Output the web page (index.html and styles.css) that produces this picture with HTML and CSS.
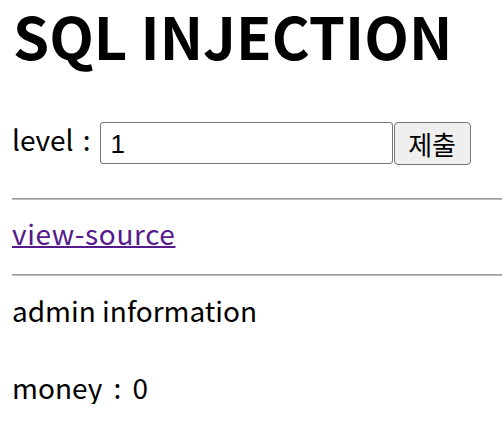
FILE: index.html
```html
<!DOCTYPE html>
<html>
<head>
<meta charset="utf-8">
<link rel="stylesheet" href="styles.css">
</head>
<body>
<h1 class="title">SQL INJECTION</h1>
<form class="level-form">
  <label class="level-label">level :</label>
  <input class="level-input" type="text" value="1">
  <button class="submit-btn" type="button">제출</button>
</form>
<hr class="rule rule-top">
<a class="source-link" href="#">view-source</a>
<hr class="rule rule-bottom">
<p class="info">admin information</p>
<p class="money">money : 0</p>
</body>
</html>
```

FILE: styles.css
```css
html, body {
  margin: 0;
  padding: 0;
  background: #fff;
}
body {
  padding-left: 12px;
  font-family: "Noto Sans CJK KR", "Noto Sans", sans-serif;
  font-size: 28px;
  line-height: 34px;
  color: #000;
  overflow: hidden;
}
.title {
  margin: 0;
  padding-left: 1px;
  font-size: 58px;
  line-height: 70px;
  font-weight: 700;
}
.level-form {
  display: flex;
  align-items: flex-start;
  margin-top: 52px;
  height: 43px;
}
.level-label {
  margin-right: 9px;
  word-spacing: 3px;
}
.level-input {
  box-sizing: border-box;
  width: 293px;
  height: 42px;
  margin: 0 1px 0 0;
  padding: 2px 10px 0;
  border: 1px solid #767676;
  border-radius: 3px;
  font-family: "Liberation Sans", Arial, sans-serif;
  font-size: 26px;
  color: #000;
}
.submit-btn {
  box-sizing: border-box;
  width: 77px;
  height: 43px;
  margin: 0;
  padding: 0;
  border: 1px solid #767676;
  border-radius: 4px;
  background: #efefef;
  font-family: "Noto Sans CJK KR", sans-serif;
  font-size: 26px;
  color: #000;
}
.rule {
  margin: 0;
  border: 0;
  border-top: 1px solid #9a9a9a;
  border-bottom: 1px solid #bcbcbc;
  height: 0;
}
.rule-top {
  margin-top: 33px;
}
.source-link {
  display: block;
  margin-top: 16px;
  color: #551a8b;
  width: max-content;
  letter-spacing: 0.6px;
  text-decoration-thickness: 2px;
}
.rule-bottom {
  margin-top: 24px;
}
.info {
  margin: 17px 0 0;
}
.money {
  margin: 43px 0 0;
  word-spacing: 5px;
}
```
